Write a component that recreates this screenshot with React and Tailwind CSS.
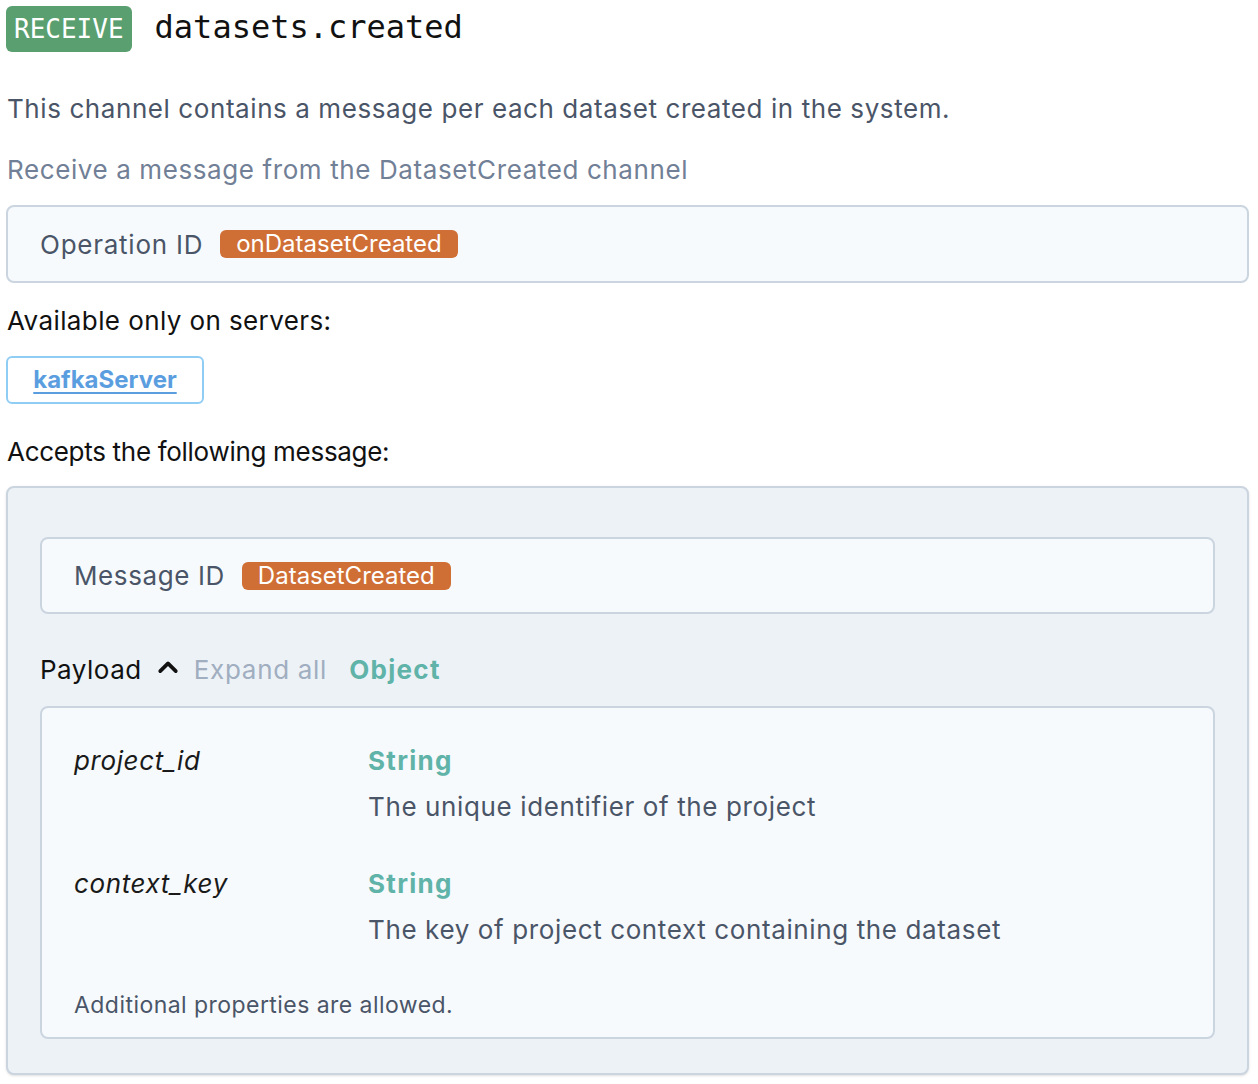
import React from "react";

const sans = { fontFamily: "Inter, 'Noto Sans', 'Liberation Sans', sans-serif" };
const mono = { fontFamily: "'DejaVu Sans Mono', 'Liberation Mono', monospace" };

function Prop({ name, desc }) {
  return (
    <div className="flex">
      <div className="w-[294px] shrink-0 italic text-[26px] leading-[32px] tracking-[0.6px] text-[#1a1a1a]">{name}</div>
      <div className="flex flex-col">
        <div className="text-[26px] leading-[32px] font-bold tracking-[1.3px] text-[#5fb3a8]">String</div>
        <div className="mt-[14px] text-[26px] leading-[32px] tracking-[0.62px] text-[#4a5568]">{desc}</div>
      </div>
    </div>
  );
}

export default function App() {
  return (
    <div className="bg-white w-[1258px] h-[1084px] overflow-hidden" style={sans}>
      <div className="pl-[6px] pr-[9px] pt-[6px]">
        <div className="flex items-center">
          <div
            className="h-[46px] px-[8px] flex items-center rounded-[6px] bg-[#5a9f6f] text-white text-[26px]"
            style={mono}
          >
            RECEIVE
          </div>
          <div className="ml-[23px] text-[32px] text-[#111] leading-[40px] -mt-[4px]" style={mono}>
            datasets.created
          </div>
        </div>

        <div className="mt-[41px] text-[26px] leading-[32px] tracking-[0.58px] text-[#4a5568] pl-[1px]">
          This channel contains a message per each dataset created in the system.
        </div>
        <div className="mt-[29px] text-[26px] leading-[32px] tracking-[0.6px] text-[#718096] pl-[1px]">
          Receive a message from the DatasetCreated channel
        </div>

        <div className="mt-[19px] h-[78px] border-2 border-[#cbd5e0] rounded-[8px] bg-[#f7fafc] flex items-center pl-[32px]">
          <span className="text-[26px] tracking-[0.75px] text-[#4a5568]">Operation ID</span>
          <span className="ml-[17px] h-[28px] px-[16px] flex items-center rounded-[6px] bg-[#d06f35] text-white text-[24px] leading-[28px]">
            onDatasetCreated
          </span>
        </div>

        <div className="mt-[22px] text-[26px] leading-[32px] tracking-[0.4px] text-[#111] pl-[1px]">
          Available only on servers:
        </div>
        <div className="mt-[19px] w-[198px] h-[48px] border-2 border-[#90cdf4] rounded-[6px] flex items-center justify-center">
          <span className="text-[24px] font-bold text-[#5b9ee0] underline decoration-2 underline-offset-[4px]">kafkaServer</span>
        </div>

        <div className="mt-[32px] text-[26px] leading-[32px] tracking-[-0.3px] text-[#111] pl-[1px]">
          Accepts the following message:
        </div>

        <div className="mt-[18px] h-[589px] border-2 border-[#cbd5e0] rounded-[8px] bg-[#edf2f7] pl-[32px] pr-[32px] pt-[49px] shadow-sm">
          <div className="h-[77px] border-2 border-[#cbd5e0] rounded-[8px] bg-[#f7fafc] flex items-center pl-[32px]">
            <span className="text-[26px] tracking-[0.6px] text-[#4a5568]">Message ID</span>
            <span className="ml-[17px] h-[28px] px-[16px] flex items-center rounded-[6px] bg-[#d06f35] text-white text-[24px] leading-[28px]">
              DatasetCreated
            </span>
          </div>

          <div className="mt-[38px] flex items-center h-[34px]">
            <span className="text-[26px] tracking-[0.5px] text-[#111]">Payload</span>
            <svg className="ml-[15px] -mt-[4px]" width="22" height="22" viewBox="0 0 24 24" fill="none" stroke="#111" strokeWidth="4" strokeLinecap="round" strokeLinejoin="round">
              <path d="M3.5 16.5L12 8l8.5 8.5" />
            </svg>
            <span className="ml-[15px] text-[26px] tracking-[0.7px] text-[#a0aec0]">Expand all</span>
            <span className="ml-[22px] text-[26px] font-bold tracking-[1.3px] text-[#5fb3a8]">Object</span>
          </div>

          <div className="mt-[20px] h-[333px] border-2 border-[#cbd5e0] rounded-[8px] bg-[#f7fafc] pl-[32px] pt-[37px]">
            <div className="flex flex-col gap-[45px]">
              <Prop name="project_id" desc="The unique identifier of the project" />
              <Prop name="context_key" desc="The key of project context containing the dataset" />
            </div>
            <div className="mt-[45px] text-[23px] leading-[28px] tracking-[0.45px] text-[#4a5568]">
              Additional properties are allowed.
            </div>
          </div>
        </div>
      </div>
    </div>
  );
}
